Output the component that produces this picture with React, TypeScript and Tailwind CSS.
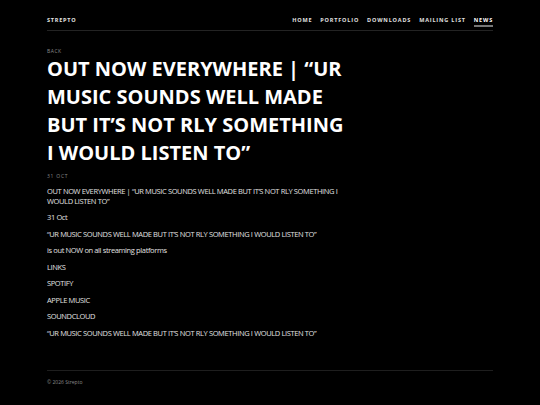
import React from "react";

const paras = [
  "OUT NOW EVERYWHERE | “UR MUSIC SOUNDS WELL MADE BUT IT’S NOT RLY SOMETHING I WOULD LISTEN TO”",
  "31 Oct",
  "“UR MUSIC SOUNDS WELL MADE BUT IT’S NOT RLY SOMETHING I WOULD LISTEN TO”",
  "is out NOW on all streaming platforms",
  "LINKS",
  "SPOTIFY",
  "APPLE MUSIC",
  "SOUNDCLOUD",
  "“UR MUSIC SOUNDS WELL MADE BUT IT’S NOT RLY SOMETHING I WOULD LISTEN TO”",
];

export default function App() {
  return (
    <div
      className="min-h-[405px] w-full bg-black text-white"
      style={{ fontFamily: '"Open Sans", "Noto Sans", sans-serif' }}
    >
      <div className="mx-[47px] flex flex-col">
        <header className="flex h-[31px] items-end justify-between border-b border-[#232323] pb-[6px]">
          <div className="text-[5.5px] font-bold leading-[8px] tracking-[0.14em] text-[#e5e5e5]">STREPTO</div>
          <nav className="flex items-center gap-[8px] text-[5.5px] font-bold leading-[8px] tracking-[0.15em] text-[#e0e0e0]">
            <span>HOME</span>
            <span>PORTFOLIO</span>
            <span>DOWNLOADS</span>
            <span>MAILING LIST</span>
            <span className="relative text-white">
              NEWS
              <span className="absolute left-0 right-[0px] top-[9px] h-[1.5px] bg-[#777]" />
            </span>
          </nav>
        </header>
        <div className="mt-[17px] text-[5px] leading-[6px] tracking-[0.1em] text-[#8a8a8a]">BACK</div>
        <h1 className="mt-[1px] w-[306px] text-[20px] font-bold leading-[28px] text-white">
          OUT NOW EVERYWHERE | “UR MUSIC SOUNDS WELL MADE BUT IT’S NOT RLY SOMETHING I WOULD LISTEN TO”
        </h1>
        <div className="mt-[6px] text-[5px] leading-[6px] tracking-[0.15em] text-[#8a8a8a]">31 OCT</div>
        <div className="mt-[8px] w-[300px] text-[7.5px] leading-[9.7px] tracking-[-0.05em] text-[#e0e0e0]">
          {paras.map((p, i) => (
            <p key={i} className="mb-[6.8px]">
              {p}
            </p>
          ))}
        </div>
        <footer className="mt-[25px] border-t border-[#1e1e1e] pt-[8px] text-[5px] leading-[6px] text-[#8a8a8a]">
          © 2026 Strepto
        </footer>
      </div>
    </div>
  );
}
